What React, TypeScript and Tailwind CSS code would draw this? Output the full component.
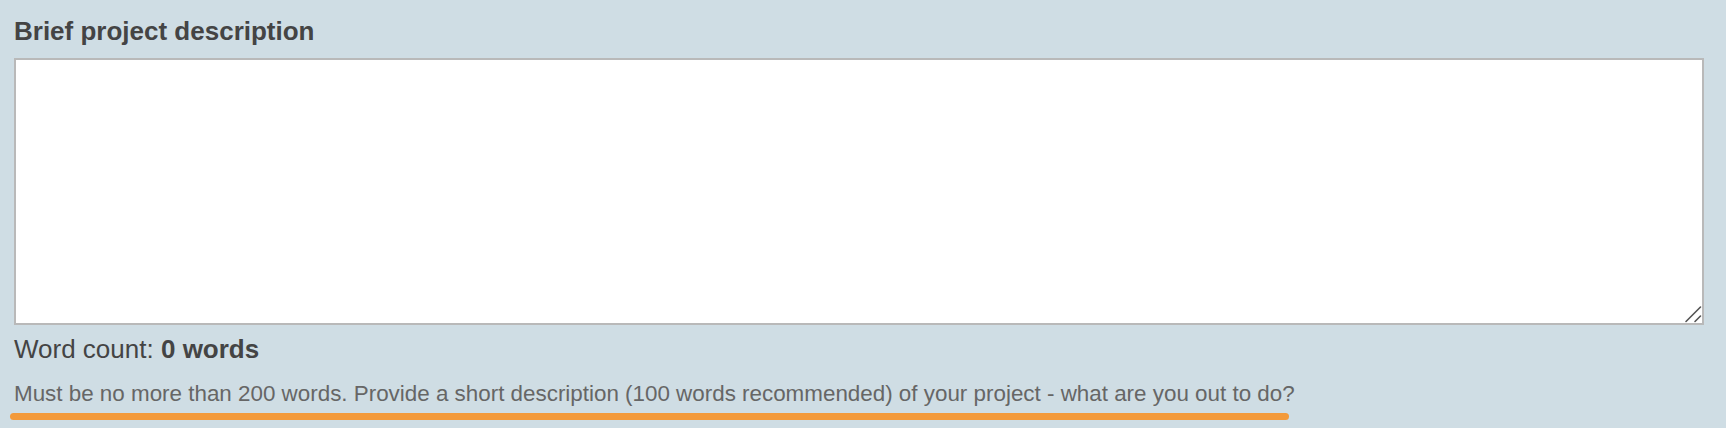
import React, { useState } from "react";

function App() {
    const [text, setText] = useState("");

    const words = text.trim() ? text.trim().split(/\s+/).length : 0;

    return (
        <main
            className="relative w-full h-[428px] bg-[#cfdde4] pl-[14px] pr-[22px] pt-[16px] overflow-hidden"
            style={{ fontFamily: '"Liberation Sans", Arial, sans-serif' }}
        >
            <label
                htmlFor="description"
                className="block text-[26px] leading-[31px] font-bold text-[#444444]"
            >
                Brief project description
            </label>

            <div className="relative mt-[11px]">
                <textarea
                    id="description"
                    value={text}
                    onChange={(e) => setText(e.target.value)}
                    className="block w-full h-[267px] bg-white border-2 border-[#b9b9b9] outline-none resize-none p-2 text-[20px] text-[#333]"
                />
                {/* resize grip */}
                <svg
                    className="absolute right-[2px] bottom-[2px] pointer-events-none"
                    width="18"
                    height="18"
                    viewBox="0 0 18 18"
                >
                    <path d="M2 16.5 L16.5 2 M11 16.5 L16.5 11" stroke="#555" strokeWidth="1.6" strokeLinecap="round" />
                </svg>
            </div>

            <p className="mt-[9px] text-[26px] leading-[31px] text-[#444444]">
                Word count: <span className="font-bold">{words} words</span>
            </p>

            <p className="mt-[16px] text-[22.4px] leading-[26px] text-[#666666]">
                Must be no more than 200 words. Provide a short description (100 words recommended) of your project - what are you out to do?
            </p>

            {/* highlight stroke */}
            <div className="absolute left-[10px] top-[413px] w-[1279px] h-[7px] rounded-full bg-[#f39a3b]" />
        </main>
    );
}

export default App;
